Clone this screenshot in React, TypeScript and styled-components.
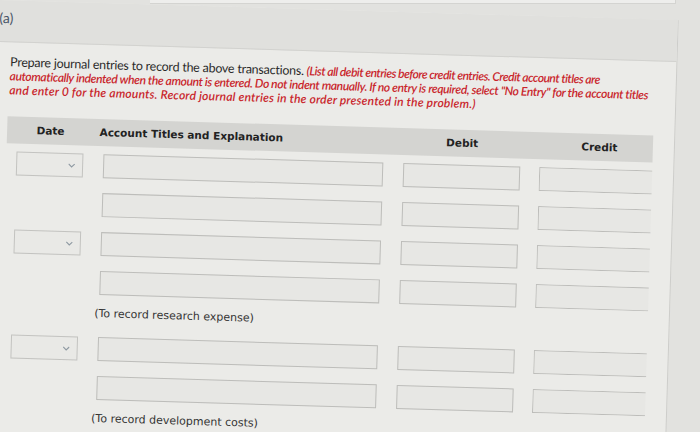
import styled, { createGlobalStyle } from 'styled-components'

const GlobalStyle = createGlobalStyle`
  html, body {
    margin: 0;
    padding: 0;
    background: #e2e2df;
    overflow: hidden;
  }
  body {
    width: 700px;
    height: 432px;
    font-family: 'DejaVu Sans', Verdana, sans-serif;
    color: #2a2a2a;
  }
`

const COLS = '97px 300px 136.5px 113px'

type Line = { date: boolean }
type Entry = { lines: Line[]; note: string }

const entries: Entry[] = [
  {
    lines: [{ date: true }, { date: false }, { date: true }, { date: false }],
    note: '(To record research expense)'
  },
  {
    lines: [{ date: true }, { date: false }],
    note: '(To record development costs)'
  }
]

function Chevron() {
  return (
    <svg width='7' height='5' viewBox='0 0 7 5'>
      <polyline points='0.5,0.8 3.5,3.8 6.5,0.8' fill='none' stroke='#8e99a2' strokeWidth='1.1' />
    </svg>
  )
}

function App() {
  return (
    <>
      <GlobalStyle />
      <TopStrip />
      <Stage>
        <Panel>
          <Band>
            <PartLabel>(a)</PartLabel>
          </Band>
          <Instructions>
            Prepare journal entries to record the above transactions.{' '}
            <Red $ls={-0.5}>(List all debit entries before credit entries. Credit account titles are</Red>
            <br />
            <Red $ls={-0.36}>
              automatically indented when the amount is entered. Do not indent manually. If no entry is required, select
              "No Entry" for the account titles
            </Red>
            <br />
            <Red $ls={0.2}>and enter 0 for the amounts. Record journal entries in the order presented in the problem.)</Red>
          </Instructions>
          <Table>
            <HeadRow>
              <DateHead>Date</DateHead>
              <AccountHead>Account Titles and Explanation</AccountHead>
              <AmountHead $w={117.5}>Debit</AmountHead>
              <AmountHead $w={119}>Credit</AmountHead>
            </HeadRow>
            {entries.map((entry, i) => (
              <Group key={i} $first={i === 0}>
                {entry.lines.map((line, j) => (
                  <Row key={j}>
                    <Cell>
                      {line.date && (
                        <Select>
                          <Chevron />
                        </Select>
                      )}
                    </Cell>
                    <Cell>
                      <Field $w={280} />
                    </Cell>
                    <Cell>
                      <Field $w={117.5} />
                    </Cell>
                    <Cell $clip>
                      <Field $w={130} />
                    </Cell>
                  </Row>
                ))}
                <Note>{entry.note}</Note>
              </Group>
            ))}
          </Table>
        </Panel>
      </Stage>
    </>
  )
}

const {
  TopStrip,
  Stage,
  Panel,
  Band,
  PartLabel,
  Instructions,
  Red,
  Table,
  HeadRow,
  DateHead,
  AccountHead,
  AmountHead,
  Group,
  Row,
  Cell,
  Select,
  Field,
  Note
} = {
  TopStrip: styled.div`
    position: absolute;
    top: 0;
    left: 150px;
    width: 525px;
    height: 3px;
    background: #eeeeec;
    border-bottom: 1px solid #d4d4d1;
    border-right: 1px solid #d4d4d1;
    z-index: 2;
  `,
  Stage: styled.div`
    width: 700px;
    transform: rotate(1.7deg);
    transform-origin: 0 0;
  `,
  Panel: styled.div`
    margin-left: -20px;
    width: 699px;
    height: 470px;
    background: #ebebe8;
    border-right: 1px solid #cdcdca;
    box-sizing: border-box;
  `,
  Band: styled.div`
    height: 42px;
    background: #e0e0dd;
    border-bottom: 1px solid #d2d2cf;
    padding: 8px 0 0 20px;
    box-sizing: border-box;
  `,
  PartLabel: styled.span`
    font-family: Lato, 'Liberation Sans', sans-serif;
    font-size: 14px;
    color: #4b586a;
  `,
  Instructions: styled.p`
    margin: 13px 0 0 32px;
    white-space: nowrap;
    font-family: Lato, 'Liberation Sans', sans-serif;
    font-size: 12.5px;
    line-height: 14px;
    color: #2b2b2b;
    letter-spacing: -0.24px;
  `,
  Red: styled.em<{ $ls: number }>`
    color: #c9262c;
    font-size: 12px;
    font-weight: 600;
    letter-spacing: ${(p) => p.$ls}px;
  `,
  Table: styled.div`
    margin: 18.5px 0 0 30.5px;
    width: 646.5px;
  `,
  HeadRow: styled.div`
    display: grid;
    grid-template-columns: ${COLS};
    align-items: center;
    height: 27px;
    background: #d4d4d1;
    font-size: 10.5px;
    font-weight: bold;
    color: #222;
  `,
  DateHead: styled.div`
    padding-left: 30px;
  `,
  AccountHead: styled.div`
    margin-left: -4px;
  `,
  AmountHead: styled.div<{ $w: number }>`
    width: ${(p) => p.$w}px;
    text-align: center;
  `,
  Group: styled.div<{ $first: boolean }>`
    display: flex;
    flex-direction: column;
    gap: 15px;
    margin-top: ${(p) => (p.$first ? 8.5 : 16)}px;
  `,
  Row: styled.div`
    display: grid;
    grid-template-columns: ${COLS};
    height: 24px;
  `,
  Cell: styled.div<{ $clip?: boolean }>`
    overflow: ${(p) => (p.$clip ? 'hidden' : 'visible')};
  `,
  Select: styled.div`
    margin-left: 10px;
    width: 67px;
    height: 24px;
    box-sizing: border-box;
    border: 1px solid #c3c3c0;
    background: #e9e9e6;
    display: flex;
    align-items: center;
    justify-content: flex-end;
    padding-right: 7px;
  `,
  Field: styled.div<{ $w: number }>`
    width: ${(p) => p.$w}px;
    height: 24px;
    box-sizing: border-box;
    border: 1px solid #bdbdba;
    background: #e7e7e4;
  `,
  Note: styled.div`
    margin: -1px 0 0 93px;
    font-size: 11px;
    line-height: 14px;
    color: #333;
    &:last-child {
      margin-top: -3px;
    }
  `
}

export default App
